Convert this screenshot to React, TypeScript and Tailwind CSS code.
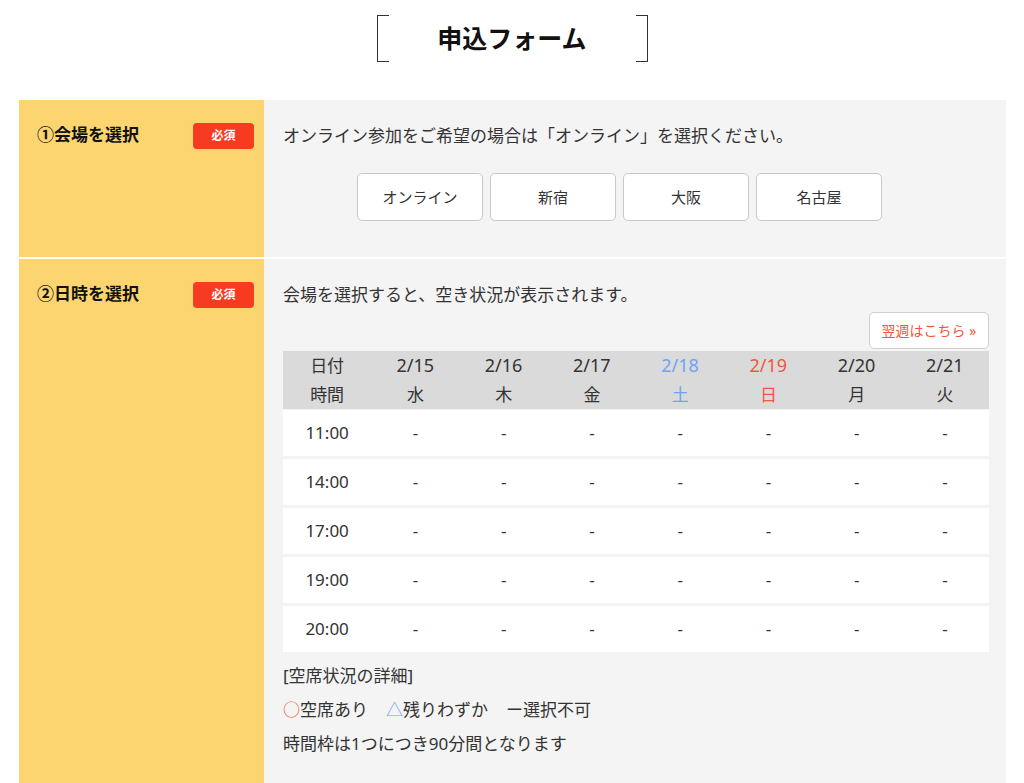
import React from "react"

const font = { fontFamily: '"Noto Sans", "Noto Sans CJK JP", sans-serif' }

const venues = ["オンライン", "新宿", "大阪", "名古屋"]

const days = [
  { date: "2/15", wd: "水", color: "text-[#333]" },
  { date: "2/16", wd: "木", color: "text-[#333]" },
  { date: "2/17", wd: "金", color: "text-[#333]" },
  { date: "2/18", wd: "土", color: "text-[#6fa3f0]" },
  { date: "2/19", wd: "日", color: "text-[#f4553a]" },
  { date: "2/20", wd: "月", color: "text-[#333]" },
  { date: "2/21", wd: "火", color: "text-[#333]" },
]

const times = ["11:00", "14:00", "17:00", "19:00", "20:00"]

function Badge() {
  return (
    <span className="flex h-[26px] w-[61px] items-center justify-center rounded-[4px] bg-[#f63b20] text-[12px] font-bold text-white">
      必須
    </span>
  )
}

function Label({ text }: { text: string }) {
  return (
    <div className="flex w-[245px] shrink-0 items-start justify-between bg-[#fcd570] pl-[18px] pr-[10px] pt-[23px]">
      <span className="text-[17px] font-bold leading-[24px] text-[#111]">{text}</span>
      <Badge />
    </div>
  )
}

export default function App() {
  return (
    <div className="min-h-[783px] bg-white text-[#333]" style={font}>
      {/* Title */}
      <div className="flex justify-center pt-[15px] pb-[38px]">
        <div className="flex h-[47px] w-[271px] items-center justify-center">
          <div className="h-full w-[12px] border-y border-l border-[#333]" />
          <h1 className="flex-1 text-center text-[25px] font-bold text-[#111]">申込フォーム</h1>
          <div className="h-full w-[12px] border-y border-r border-[#333]" />
        </div>
      </div>

      <div className="ml-[19px] mr-[18px] flex flex-col gap-[2px]">
        {/* Row 1 */}
        <div className="flex h-[157px]">
          <Label text="①会場を選択" />
          <div className="flex-1 bg-[#f4f4f4] pl-[19px] pr-[17px] pt-[24px]">
            <p className="text-[17px] leading-[24px]">オンライン参加をご希望の場合は「オンライン」を選択ください。</p>
            <div className="mt-[25px] flex gap-[7px] pl-[74px]">
              {venues.map((v) => (
                <button
                  key={v}
                  className="flex h-[48px] w-[126px] items-center justify-center rounded-[5px] border border-[#c8c8c8] bg-white text-[15px] text-[#333]"
                >
                  {v}
                </button>
              ))}
            </div>
          </div>
        </div>

        {/* Row 2 */}
        <div className="flex h-[530px]">
          <Label text="②日時を選択" />
          <div className="flex-1 bg-[#f4f4f4] pl-[19px] pr-[17px] pt-[24px]">
            <p className="text-[17px] leading-[24px]">会場を選択すると、空き状況が表示されます。</p>
            <div className="mt-[5px] flex justify-end">
              <button className="flex h-[37px] w-[120px] items-center justify-center rounded-[5px] border border-[#cfcfcf] bg-white text-[14px] text-[#f4553a]">
                翌週はこちら »
              </button>
            </div>

            {/* Table */}
            <div className="mt-[2px] flex flex-col gap-[1px]">
              <div className="grid h-[58px] grid-cols-8 items-center bg-[#dadada] leading-[29px]">
                <div className="flex flex-col items-center text-[17px]">
                  <span>日付</span>
                  <span>時間</span>
                </div>
                {days.map((d) => (
                  <div key={d.date} className={`flex flex-col items-center ${d.color}`}>
                    <span className="text-[18px]">{d.date}</span>
                    <span className="text-[17px]">{d.wd}</span>
                  </div>
                ))}
              </div>
              <div className="flex flex-col gap-[3px]">
                {times.map((t) => (
                  <div key={t} className="grid h-[46px] grid-cols-8 items-center bg-white text-[17px]">
                    <div className="text-center">{t}</div>
                    {days.map((d) => (
                      <div key={d.date} className="text-center">-</div>
                    ))}
                  </div>
                ))}
              </div>
            </div>

            <div className="mt-[12px] flex flex-col gap-[10px] text-[17px] leading-[24px]">
              <p>[空席状況の詳細]</p>
              <p>
                <span className="text-[#f4553a]">○</span>空席あり<span className="ml-[18px] text-[#6fa3f0]">△</span>残りわずか<span className="ml-[18px]">ー</span>選択不可
              </p>
              <p>時間枠は1つにつき90分間となります</p>
            </div>
          </div>
        </div>
      </div>
    </div>
  )
}
